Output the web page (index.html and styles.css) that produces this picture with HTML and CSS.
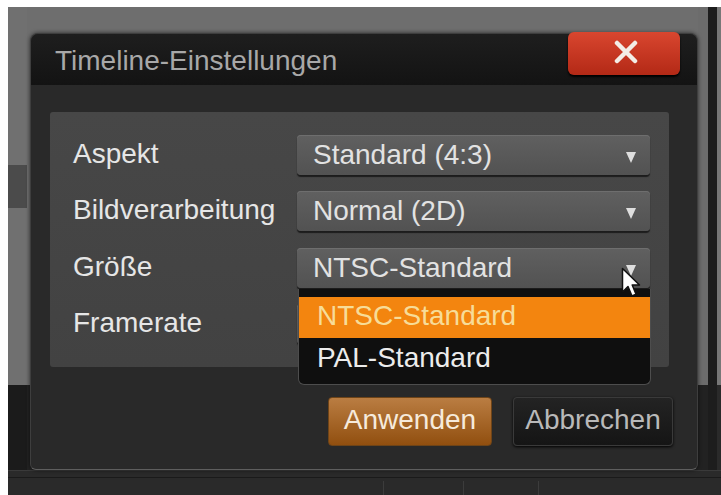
FILE: index.html
```html
<!DOCTYPE html>
<html lang="de">
<head>
<meta charset="utf-8">
<title>Timeline-Einstellungen</title>
<link rel="stylesheet" href="styles.css">
</head>
<body>
<div class="screen">
  <div class="app">
    <div class="app-main">
      <div class="side-left">
        <div class="side-block"></div>
        <div class="side-dark"></div>
      </div>
      <div class="center"></div>
      <div class="side-right">
        <div class="gap-col"></div>
        <div class="bar-col"></div>
        <div class="edge-col"></div>
      </div>
    </div>
    <div class="taskbar">
      <span class="sep sep-1"></span>
      <span class="sep sep-2"></span>
      <span class="sep sep-3"></span>
    </div>
  </div>

  <div class="dialog">
    <div class="titlebar">
      <div class="title">Timeline-Einstellungen</div>
      <div class="close">
        <svg width="26" height="24" viewBox="0 0 26 24">
          <path d="M4 3 L22 21 M22 3 L4 21" stroke="#f3ede6" stroke-width="4.5" stroke-linecap="round" fill="none"/>
        </svg>
      </div>
    </div>
    <div class="body">
      <div class="panel">
        <div class="label">Aspekt</div>
        <div class="select"><span class="value">Standard (4:3)</span><span class="arrow"></span></div>

        <div class="label">Bildverarbeitung</div>
        <div class="select"><span class="value">Normal (2D)</span><span class="arrow"></span></div>

        <div class="label">Größe</div>
        <div class="select open">
          <span class="value">NTSC-Standard</span><span class="arrow"></span>
          <div class="menu">
            <div class="menu-item active">NTSC-Standard</div>
            <div class="menu-item last">PAL-Standard</div>
          </div>
          <svg class="cursor" width="21" height="32" viewBox="0 0 21 32">
            <path d="M1.5 1.5 L1.5 25 L7 19.5 L11 29 L15 27.2 L11.2 18 L18.5 18 Z" fill="#ffffff" stroke="#111111" stroke-width="1.5" stroke-linejoin="round"/>
          </svg>
        </div>

        <div class="label">Framerate</div>
        <div class="select"><span class="value"></span><span class="arrow"></span></div>
      </div>
      <div class="buttons">
        <div class="btn btn-primary">Anwenden</div>
        <div class="btn btn-secondary">Abbrechen</div>
      </div>
    </div>
  </div>
</div>
</body>
</html>
```

FILE: styles.css
```css
html, body {
  margin: 0;
  padding: 0;
  background: #ffffff;
}

body {
  font-family: "Liberation Sans", Arial, sans-serif;
}

.screen {
  position: relative;
  margin: 7px 0 0 8px;
  width: 713px;
  height: 488px;
  overflow: hidden;
  background: #6e6e6e;
}

.app {
  display: flex;
  flex-direction: column;
  height: 100%;
}

.app-main {
  flex: 1;
  display: flex;
}

.side-left {
  width: 19px;
  display: flex;
  flex-direction: column;
  background: #707070;
}

.side-block {
  margin-top: 158px;
  height: 43px;
  background: #4b4b4b;
}

.side-dark {
  margin-top: auto;
  height: 85px;
  background: #1b1b1b;
}

.center {
  flex: 1;
  background: linear-gradient(#6e6e6e 378px, #222222 378px);
}

.side-right {
  width: 23px;
  display: flex;
}

.gap-col {
  width: 10px;
  background: linear-gradient(#6c6c6c 378px, #222222 378px);
}

.bar-col {
  width: 9px;
  background: #1d1d1d;
}

.edge-col {
  width: 4px;
  background: linear-gradient(#777777 378px, #2a2a2a 378px);
}

.taskbar {
  height: 25px;
  background: #2a2a2a;
  border-top: 1px solid #3a3a3a;
  box-sizing: border-box;
  display: flex;
  align-items: flex-end;
  position: relative;
}

.taskbar::before {
  content: "";
  position: absolute;
  left: 0;
  right: 0;
  top: 6px;
  height: 1px;
  background: #1a1a1a;
}

.sep {
  width: 1px;
  height: 14px;
  background: #3c3c3c;
}

.sep-1 { margin-left: 375px; }
.sep-2 { margin-left: 79px; }
.sep-3 { margin-left: 74px; }

/* Dialog window */
.dialog {
  position: absolute;
  left: 22px;
  top: 26px;
  width: 668px;
  height: 437px;
  box-sizing: border-box;
  border: 1px solid #3e3e3e;
  border-bottom-color: #5e5e5e;
  border-radius: 8px 8px 6px 6px;
  background: #292929;
  display: flex;
  flex-direction: column;
  box-shadow: 0 0 4px rgba(0, 0, 0, 0.6);
}

.titlebar {
  height: 51px;
  flex: none;
  display: flex;
  justify-content: space-between;
  align-items: flex-start;
  background: linear-gradient(#1e1e1e, #131313);
  border-radius: 7px 7px 0 0;
}

.title {
  padding: 11px 0 0 24px;
  font-size: 28px;
  line-height: 32px;
  color: #a8a8a8;
}

.close {
  width: 112px;
  height: 43px;
  margin: -2px 17px 0 0;
  border-radius: 6px;
  background: linear-gradient(#d9462f, #b32916);
  box-shadow: 0 2px 2px #000000;
  display: flex;
  align-items: center;
  justify-content: center;
}

.close svg {
  margin-left: 4px;
  margin-top: -3px;
}

.body {
  flex: 1;
  padding: 27px 24px 0 19px;
  display: flex;
  flex-direction: column;
}

.panel {
  margin-right: 4px;
  height: 255px;
  box-sizing: border-box;
  padding: 23px 19px 23px 23px;
  background: linear-gradient(#474747, #424242);
  border-radius: 3px;
  display: grid;
  grid-template-columns: 224px 353px;
  grid-auto-rows: 40px;
  row-gap: 16.33px;
}

.label {
  font-size: 28px;
  line-height: 38px;
  color: #e6e6e6;
}

.select {
  position: relative;
  height: 40px;
  box-sizing: border-box;
  border-radius: 4px;
  background: linear-gradient(#606060, #525252);
  box-shadow: 0 2px 1px #1c1c1c, inset 0 1px 0 #6e6e6e;
  display: flex;
  align-items: center;
  justify-content: space-between;
  padding: 0 14px 0 16px;
  font-size: 28px;
  line-height: 40px;
  color: #e2e2e2;
}

.arrow {
  width: 0;
  height: 0;
  border-left: 5.5px solid transparent;
  border-right: 5.5px solid transparent;
  border-top: 11px solid #dedede;
  margin-top: 5px;
}

.menu {
  position: absolute;
  top: calc(100% + 1px);
  left: 1px;
  width: 353px;
  box-sizing: border-box;
  padding-top: 8px;
  background: #0f0f0f;
  border: 1px solid #4d4d4d;
  border-top: 0;
  border-radius: 0 0 6px 6px;
  z-index: 2;
}

.menu-item {
  height: 41px;
  padding-left: 18px;
  font-size: 28px;
  line-height: 38px;
  color: #ececec;
}

.menu-item.active {
  background: #f3850f;
  color: #f7dc98;
}

.menu-item.last {
  height: 46px;
  line-height: 40px;
}

.cursor {
  position: absolute;
  left: 324px;
  top: 19px;
  z-index: 3;
}

.buttons {
  margin-top: 30px;
  display: flex;
  justify-content: flex-end;
  gap: 21px;
}

.btn {
  height: 49px;
  box-sizing: border-box;
  border-radius: 4px;
  font-size: 28px;
  line-height: 44px;
  padding-bottom: 3px;
  text-align: center;
}

.btn-primary {
  width: 164px;
  background: linear-gradient(#ba7d42, #914f0f);
  border: 1px solid #6e4418;
  color: #f6eadb;
}

.btn-secondary {
  width: 160px;
  background: linear-gradient(#232323, #151515);
  border: 1px solid #3a3a3a;
  color: #b9b9b9;
  box-shadow: 0 1px 3px #000000;
}
```
